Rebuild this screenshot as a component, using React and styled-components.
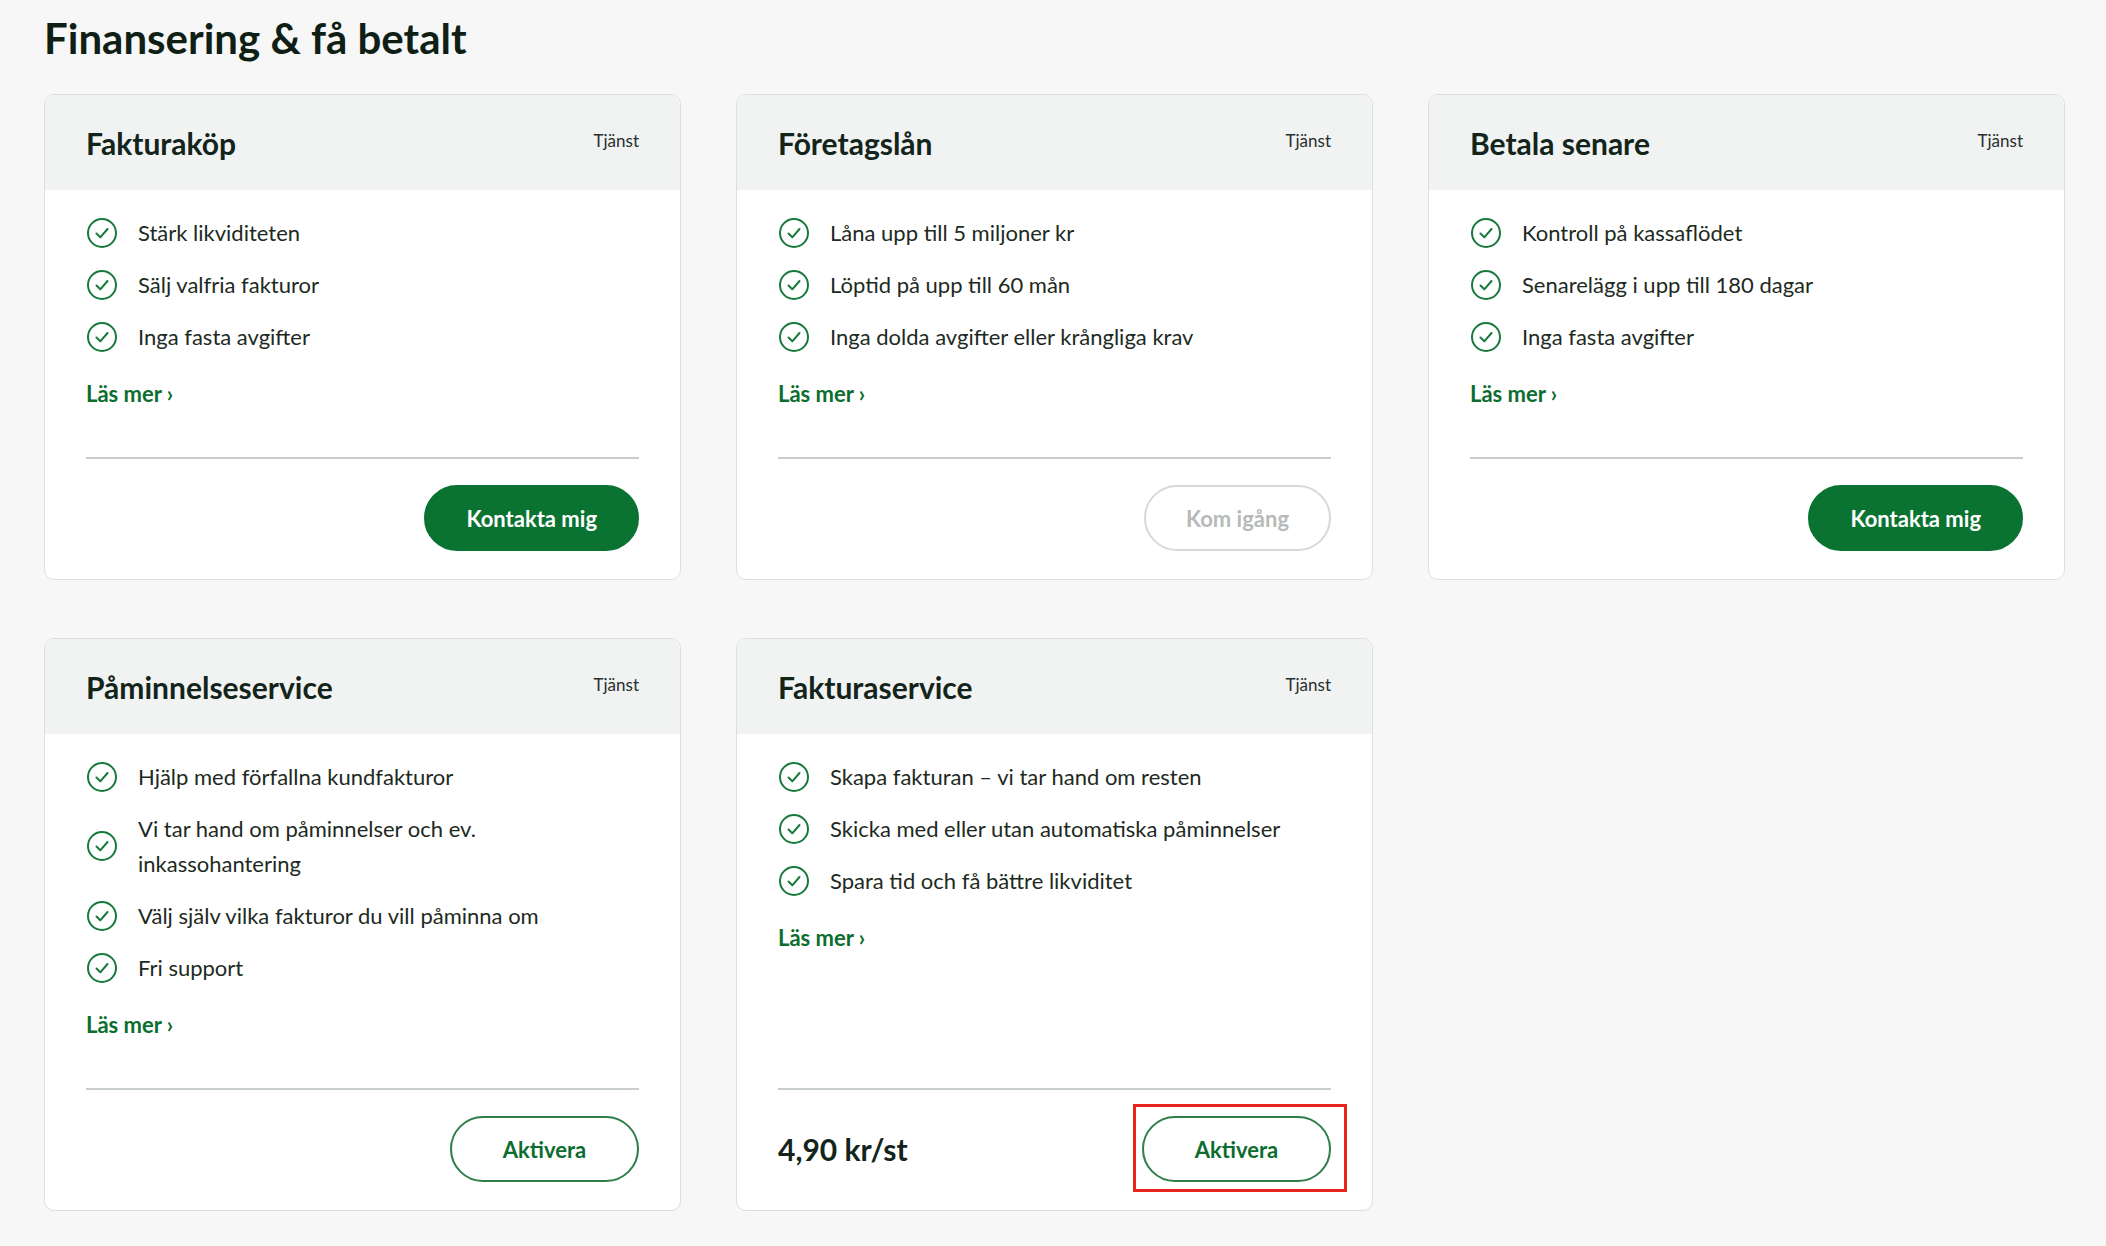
import React from "react";
import styled, { createGlobalStyle, css } from "styled-components";

const GlobalStyle = createGlobalStyle`
  body {
    margin: 0;
    background: #f7f7f7;
    font-family: Lato, "Open Sans", sans-serif;
    color: #13241a;
  }
`;

const Page = styled.div`
  padding: 12px 43px 30px 44px;
`;

const PageTitle = styled.h1`
  margin: 0 0 30px;
  font-size: 42px;
  font-weight: 700;
  line-height: 52px;
  color: #0f1f16;
`;

const Grid = styled.div`
  display: grid;
  grid-template-columns: repeat(3, 637px);
  column-gap: 55px;
  row-gap: 58px;
`;

const Card = styled.div`
  background: #fff;
  border: 1px solid #dcdfdd;
  border-radius: 10px;
  overflow: visible;
  display: flex;
  flex-direction: column;
`;

const CardHeader = styled.div`
  background: #f1f2f2;
  height: 95px;
  border-radius: 10px 10px 0 0;
  padding: 0 41px 0 41px;
  display: flex;
  justify-content: space-between;
  align-items: flex-start;
`;

const CardTitle = styled.h2`
  margin: 30px 0 0;
  font-size: 30px;
  font-weight: 700;
  color: #13241a;
`;

const Tag = styled.span`
  margin-top: 35px;
  font-size: 17px;
  color: #2a2f2c;
`;

const CardBody = styled.div`
  flex: 1;
  display: flex;
  flex-direction: column;
  padding: 25px 41px 28px;
`;

const List = styled.ul`
  list-style: none;
  margin: 0;
  padding: 0;
  display: flex;
  flex-direction: column;
  gap: 17px;
`;

const Item = styled.li`
  display: flex;
  align-items: center;
  gap: 20px;
  font-size: 22px;
  line-height: 35px;
  color: #1d2a22;
  svg { flex-shrink: 0; }
`;

const ReadMore = styled.a`
  margin-top: 26px;
  font-size: 22px;
  font-weight: 700;
  color: #0b6e2f;
  text-decoration: none;
`;

const Footer = styled.div`
  margin-top: auto;
  padding-top: 50px;
`;

const Divider = styled.div`
  height: 2px;
  background: #c9cfcc;
  margin-bottom: 26px;
`;

const FooterRow = styled.div`
  display: flex;
  align-items: center;
  justify-content: ${(p) => (p.$price ? "space-between" : "flex-end")};
`;

const Price = styled.span`
  font-size: 30px;
  font-weight: 700;
  color: #13241a;
`;

const Button = styled.button`
  position: relative;
  height: 66px;
  padding: 0 40px;
  border-radius: 33px;
  font-family: inherit;
  font-size: 22px;
  font-weight: 700;
  cursor: pointer;
  ${(p) =>
    p.$variant === "primary"
      ? css`
          background: #0a7331;
          border: 2px solid #0a7331;
          color: #fff;
        `
      : p.$variant === "disabled"
      ? css`
          background: #fff;
          border: 2px solid #d7d9d8;
          color: #b7bab8;
        `
      : css`
          background: #fff;
          border: 2px solid #2f7d4a;
          color: #0b6e2f;
          min-width: 189px;
        `}
  ${(p) =>
    p.$highlight &&
    css`
      &::after {
        content: "";
        position: absolute;
        inset: -14px -18px -12px -11px;
        border: 3px solid #e8271c;
      }
    `}
`;

const Check = () => (
  <svg width="32" height="32" viewBox="0 0 32 32" fill="none">
    <circle cx="16" cy="16" r="14" stroke="#177a3c" strokeWidth="2" />
    <path d="M10.5 16.5l3.8 3.8 7.2-8.3" stroke="#177a3c" strokeWidth="2" strokeLinecap="round" strokeLinejoin="round" />
  </svg>
);

const cards = [
  { title: "Fakturaköp", items: ["Stärk likviditeten", "Sälj valfria fakturor", "Inga fasta avgifter"], btn: "Kontakta mig", v: "primary" },
  { title: "Företagslån", items: ["Låna upp till 5 miljoner kr", "Löptid på upp till 60 mån", "Inga dolda avgifter eller krångliga krav"], btn: "Kom igång", v: "disabled" },
  { title: "Betala senare", items: ["Kontroll på kassaflödet", "Senarelägg i upp till 180 dagar", "Inga fasta avgifter"], btn: "Kontakta mig", v: "primary" },
  { title: "Påminnelseservice", items: ["Hjälp med förfallna kundfakturor", "Vi tar hand om påminnelser och ev. inkassohantering", "Välj själv vilka fakturor du vill påminna om", "Fri support"], btn: "Aktivera", v: "outline" },
  { title: "Fakturaservice", items: ["Skapa fakturan – vi tar hand om resten", "Skicka med eller utan automatiska påminnelser", "Spara tid och få bättre likviditet"], btn: "Aktivera", v: "outline", price: "4,90 kr/st", highlight: true },
];

export default function App() {
  return (
    <Page>
      <GlobalStyle />
      <PageTitle>Finansering &amp; få betalt</PageTitle>
      <Grid>
        {cards.map((c) => (
          <Card key={c.title}>
            <CardHeader>
              <CardTitle>{c.title}</CardTitle>
              <Tag>Tjänst</Tag>
            </CardHeader>
            <CardBody>
              <List>
                {c.items.map((i) => (
                  <Item key={i}>
                    <Check />
                    <span>{i}</span>
                  </Item>
                ))}
              </List>
              <ReadMore href="#">Läs mer ›</ReadMore>
              <Footer>
                <Divider />
                <FooterRow $price={!!c.price}>
                  {c.price && <Price>{c.price}</Price>}
                  <Button $variant={c.v} $highlight={c.highlight}>{c.btn}</Button>
                </FooterRow>
              </Footer>
            </CardBody>
          </Card>
        ))}
      </Grid>
    </Page>
  );
}
